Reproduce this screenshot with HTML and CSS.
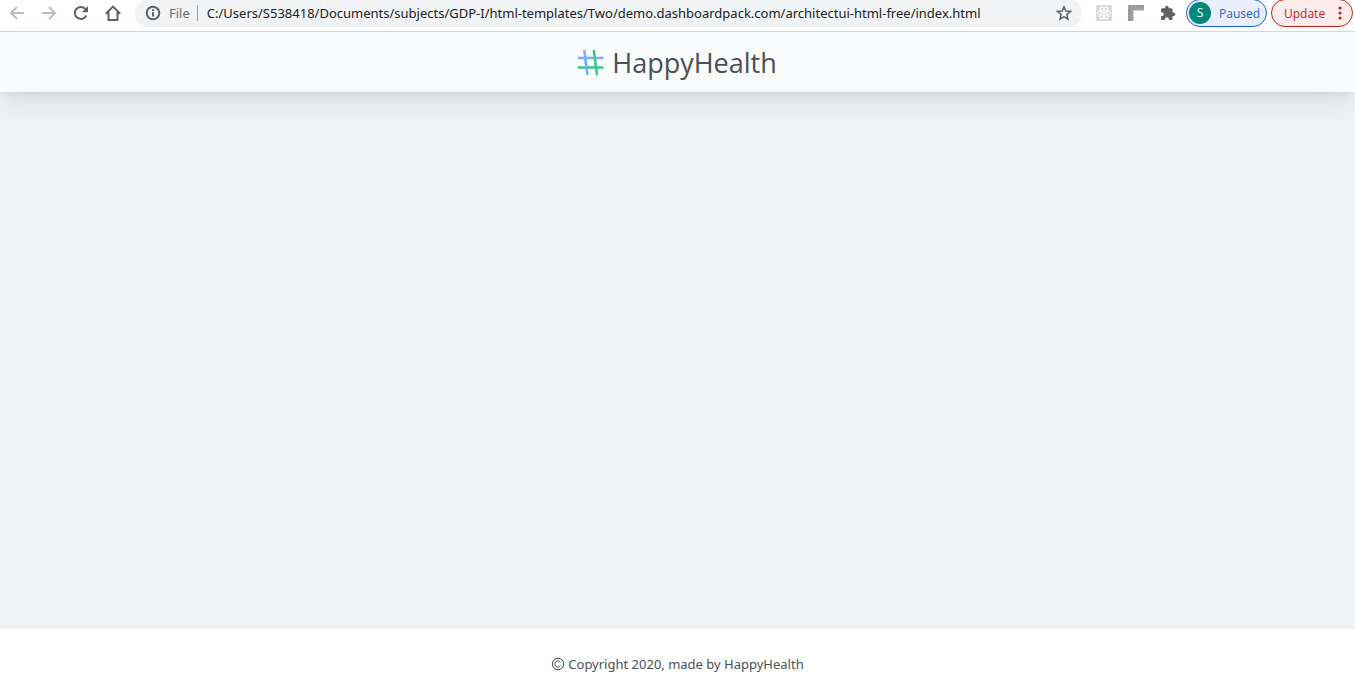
FILE: index.html
```html
<!DOCTYPE html>
<html lang="en">
<head>
<meta charset="utf-8">
<meta name="viewport" content="width=device-width, initial-scale=1">
<title>HappyHealth</title>
<link rel="stylesheet" href="styles.css">
</head>
<body>
<div class="toolbar">
  <nav class="nav-buttons" aria-label="Browser">
    <button class="icon-button muted" type="button" aria-label="Back">
      <svg viewBox="0 0 16 16"><path d="M15 8H2M8 2 2 8l6 6"/></svg>
    </button>
    <button class="icon-button muted" type="button" aria-label="Forward">
      <svg viewBox="0 0 16 16"><path d="M1 8h13M8 2l6 6-6 6"/></svg>
    </button>
    <button class="icon-button" type="button" aria-label="Reload">
      <svg viewBox="0 0 16 16"><path d="M13.300 10.500A6 6 0 1 1 12.400 4"/><path class="solid" d="M15 1v6.300H8.800z"/></svg>
    </button>
    <button class="icon-button" type="button" aria-label="Home">
      <svg viewBox="0 0 16 16"><path d="M.8 8.800 8 1.600l7.200 7.200M3.500 7v8h9V7"/></svg>
    </button>
  </nav>
  <div class="omnibox">
    <svg class="info" viewBox="0 0 16 16" aria-hidden="true"><circle cx="8" cy="8" r="6.300"/><path d="M8 7.200v4.300M8 4.300v1.700"/></svg>
    <label class="scheme" for="address">File</label>
    <input class="address" id="address" type="text" spellcheck="false" value="C:/Users/S538418/Documents/subjects/GDP-I/html-templates/Two/demo.dashboardpack.com/architectui-html-free/index.html">
    <button class="icon-button star" type="button" aria-label="Bookmark this page">
      <svg viewBox="0 0 16 16"><path d="m8 1.800 1.800 4.300 4.700.4-3.600 3 1.100 4.600L8 11.700l-4 2.400 1.100-4.600-3.600-3 4.700-.4z"/></svg>
    </button>
  </div>
  <div class="extensions">
    <button class="icon-button" type="button" aria-label="React tools">
      <svg viewBox="0 0 16 16"><path fill="#dcdcdc" stroke="none" d="M0 0h16v16H0z"/><g stroke="#fff" stroke-width="1"><ellipse cx="8" cy="8" rx="6.500" ry="2.500"/><ellipse cx="8" cy="8" rx="6.500" ry="2.500" transform="rotate(60 8 8)"/><ellipse cx="8" cy="8" rx="6.500" ry="2.500" transform="rotate(120 8 8)"/><circle cx="8" cy="8" r="1" fill="#fff"/></g></svg>
    </button>
    <button class="icon-button" type="button" aria-label="Page ruler">
      <svg viewBox="0 0 16 16"><path fill="#a0a0a0" stroke="none" d="M0 0h16v5.500H5.500V16H0z"/><path stroke="#868686" stroke-width="1" d="M2.500.5V2M5.500.5V2M8.500.5V2M11.500.5V2M14.500.5V2M.5 5.500H2M.5 8.500H2M.5 11.500H2M.5 14.500H2"/></svg>
    </button>
    <button class="icon-button" type="button" aria-label="Extensions">
      <svg viewBox="0 0 16 16"><path class="solid" d="M13.500 7.500h-1V4.600c0-.8-.6-1.300-1.300-1.300H8.700v-.8a1.800 1.800 0 0 0-3.600 0v.8H2.300C1.500 3.300 1 3.900 1 4.600v2.600h.8a2 2 0 0 1 0 4H1v2.500c0 .8.500 1.300 1.300 1.300h2.600v-.8a2 2 0 0 1 4 0v.8h2.300c.7 0 1.300-.5 1.300-1.300v-2.600h1a1.800 1.800 0 0 0 0-3.600z"/></svg>
    </button>
  </div>
  <button class="pill profile" type="button"><span class="avatar">S</span>Paused</button>
  <button class="pill update" type="button">Update
    <svg class="dots" viewBox="0 0 4 14" aria-hidden="true"><circle cx="2" cy="2" r="1.600"/><circle cx="2" cy="7" r="1.600"/><circle cx="2" cy="12" r="1.600"/></svg>
  </button>
</div>
<header class="header">
  <svg class="logo" viewBox="0 0 26 26" aria-hidden="true">
    <g fill="none" stroke-width="2.500">
      <path stroke="#78b1fb" d="M0 8h25.500M6.200 0l3.300 25"/>
      <path stroke="#35ca85" d="M0 17.500h25.500M15.700 0 19 25"/>
      <path stroke="#78b1fb" d="m7.500 10 1.300 10"/>
    </g>
  </svg>
  <h1 class="brand">HappyHealth</h1>
</header>
<main class="main"></main>
<footer class="footer">
  <svg class="copyright" viewBox="0 0 14 14" role="img" aria-label="Copyright"><circle cx="7" cy="7" r="5.700"/><path d="M9.400 5.300a3 3 0 1 0 0 3.400"/></svg>
  <span>Copyright 2020, made by HappyHealth</span>
</footer>
</body>
</html>
```

FILE: styles.css
```css
* {
  box-sizing: border-box;
}

body {
  margin: 0;
  min-height: 100vh;
  display: flex;
  flex-direction: column;
  background: #eff3f6;
  color: #495057;
  font-family: "Noto Sans", "Open Sans", sans-serif;
  font-size: 13px;
}

button,
input {
  margin: 0;
  padding: 0;
  border: 0;
  background: none;
  font: inherit;
}

svg {
  display: block;
  flex: none;
}

.toolbar {
  display: flex;
  align-items: flex-start;
  height: 32px;
  padding-right: 2px;
  border-bottom: 1px solid #d9dadc;
  background: #fff;
  overflow: hidden;
}

.nav-buttons,
.extensions {
  display: flex;
  gap: 16px;
  padding: 5px 14px 0 9px;
}

.icon-button {
  width: 16px;
  height: 16px;
  color: #5f6368;
}

.icon-button svg {
  width: 16px;
  height: 16px;
  fill: none;
  stroke: currentColor;
  stroke-width: 2;
}

.icon-button .solid {
  fill: currentColor;
  stroke: none;
}

.muted {
  color: #babcbe;
}

.omnibox {
  flex: 1;
  display: flex;
  align-items: center;
  height: 28px;
  margin-top: -1px;
  padding: 0 10px;
  border-radius: 14px;
  background: #f1f3f4;
}

.info {
  width: 16px;
  height: 16px;
  fill: none;
  stroke: #5f6368;
  stroke-width: 2;
}

.scheme {
  margin-left: 8px;
  padding-right: 7px;
  border-right: 1px solid #9aa0a6;
  color: #6b6f73;
  line-height: 16px;
}

.address {
  flex: 1;
  min-width: 0;
  margin-left: 9px;
  color: #202124;
}

.star svg {
  stroke-width: 1.5;
}

.extensions {
  padding: 5px 10px 0 14px;
}

.pill {
  display: flex;
  align-items: center;
  height: 28px;
  margin-top: -1px;
  border: 1px solid;
  border-radius: 14px;
  font-family: "Open Sans", sans-serif;
  font-size: 12px;
}

.profile {
  width: 81px;
  gap: 8px;
  padding-left: 2px;
  border-color: #1a63d2;
  background: #e9f0fc;
  color: #2c61cf;
}

.avatar {
  width: 22px;
  height: 22px;
  border-radius: 50%;
  background: #00897b;
  color: #fff;
  line-height: 22px;
  text-align: center;
}

.update {
  width: 82px;
  justify-content: space-between;
  margin-left: 4px;
  padding: 0 10px 0 12px;
  border-color: #c5221f;
  background: #fceceb;
  color: #c5221f;
}

.dots {
  width: 4px;
  height: 14px;
  fill: currentColor;
}

.header {
  display: flex;
  align-items: center;
  justify-content: center;
  gap: 8px;
  height: 60px;
  padding-top: 2px;
  background: #fafbfc;
  box-shadow: 0 8px 35px rgba(4, 9, 20, 0.04), 0 15px 22px rgba(4, 9, 20, 0.04), 0 4px 8px rgba(4, 9, 20, 0.04), 0 2px 3px rgba(4, 9, 20, 0.02);
}

.logo {
  width: 26px;
  height: 26px;
}

.brand {
  margin: 0;
  font-family: "Open Sans", sans-serif;
  font-size: 27px;
  font-weight: 400;
  line-height: 36px;
}

.main {
  flex: 1;
}

.footer {
  display: flex;
  align-items: center;
  justify-content: center;
  gap: 3px;
  min-height: 56px;
  padding: 14px 16px 0;
  background: #fff;
}

.copyright {
  width: 14px;
  height: 14px;
  fill: none;
  stroke: currentColor;
}
```
